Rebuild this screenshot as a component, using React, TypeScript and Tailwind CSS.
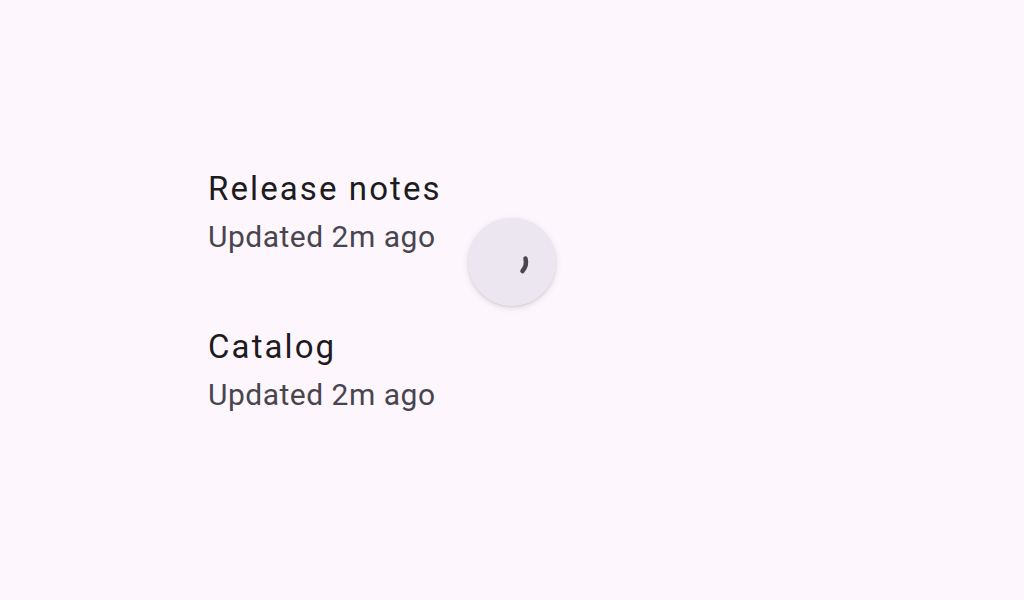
const items = [
    { title: "Release notes", subtitle: "Updated 2m ago" },
    { title: "Catalog", subtitle: "Updated 2m ago" },
]

function RefreshIndicator() {
    return (
        <div className="absolute left-[468px] top-[218px] flex size-[88px] items-center justify-center rounded-full bg-[#ece6f0] shadow-[0_2px_6px_rgba(0,0,0,0.12),0_1px_2px_rgba(0,0,0,0.08)]">
            <svg width="88" height="88" viewBox="0 0 88 88">
                {/* arco curto do indicador de progresso */}
                <path
                    d="M57.5 40.5 A14 14 0 0 1 54.5 53"
                    fill="none"
                    stroke="#49454f"
                    strokeWidth="4.5"
                    strokeLinecap="round"
                />
            </svg>
        </div>
    )
}

export default function App() {
    return (
        <div
            className="relative h-[600px] w-[1024px] overflow-hidden bg-[#fdf7fd]"
            style={{ fontFamily: "Roboto, 'Noto Sans', sans-serif" }}
        >
            <div className="flex flex-col gap-[72px] pl-[208px] pt-[169px]">
                {items.map((item) => (
                    <div key={item.title} className="flex flex-col gap-[10px]">
                        <p className="text-[33px] leading-[40px] tracking-[2.1px] text-[#1d1b20]">
                            {item.title}
                        </p>
                        <p className="text-[30px] leading-[36px] tracking-[0.5px] text-[#49454f]">
                            {item.subtitle}
                        </p>
                    </div>
                ))}
            </div>
            <RefreshIndicator />
        </div>
    )
}
